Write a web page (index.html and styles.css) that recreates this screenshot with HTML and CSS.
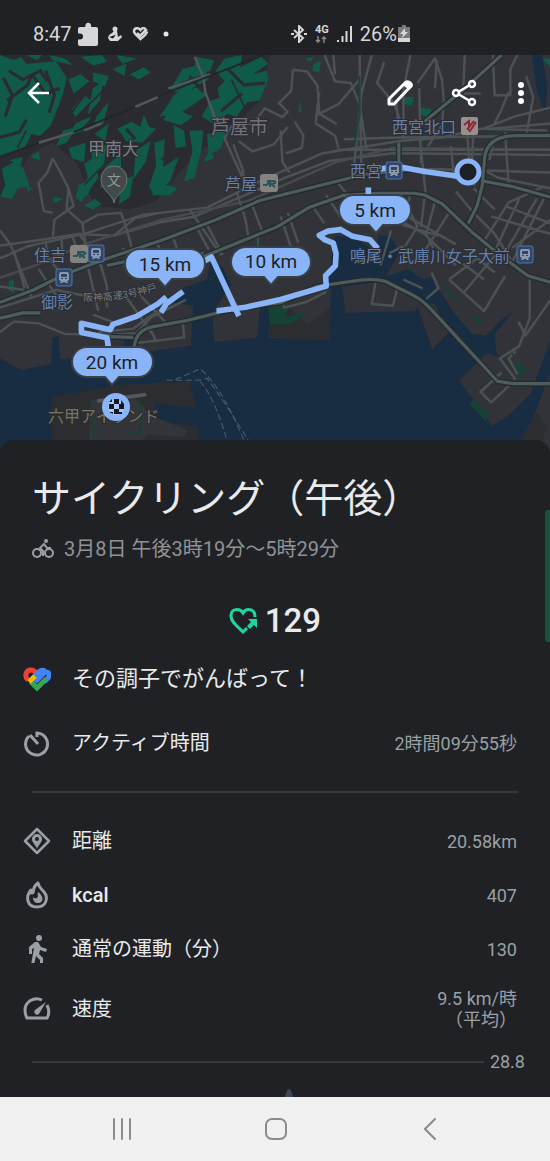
FILE: index.html
```
<!DOCTYPE html>
<html lang="ja">
<head>
    <meta charset="UTF-8">
    <meta name="viewport" content="width=device-width, initial-scale=1.0">
    <title>サイクリング（午後）</title>
    <link rel="stylesheet" href="styles.css">
</head>
<body>
    <div class="status-bar">
        <div class="status-left">
            <span class="clock">8:47</span>
            <svg width="20" height="24" viewBox="0 0 20 24"><path fill="#d6d7d8" d="M2 5h5.500a3 3 0 1 1 5.500 0H18a2 2 0 0 1 2 2v15a2 2 0 0 1-2 2H2a2 2 0 0 1-2-2v-4.500h2a3 3 0 0 0 0-6H0V7a2 2 0 0 1 2-2z"/></svg>
            <svg class="status-figure" width="14" height="16" viewBox="0 0 14 16"><circle cx="7" cy="3" r="2.500" fill="#d6d7d8"/><path fill="#d6d7d8" d="M6 5h3l1 6 3-2 1 2-4 4H2l-2-3 1-3 3-2z"/><path stroke="#202124" d="M2 11l3 1 2-3"/></svg>
            <svg class="status-heart" width="17" height="14" viewBox="0 0 17 14"><path fill="none" stroke="#d6d7d8" stroke-width="2.500" d="M5 6l3 3 6-6c-2-3-4-2-5.500 0C6 0 2 1 2 4.500c0 2 3 4 6.500 7.500C12 9 15 7 15 4.500"/></svg>
            <svg width="6" height="6" viewBox="0 0 6 6"><circle cx="3" cy="3" r="2.500" fill="#e8e8e8"/></svg>
        </div>
        <div class="status-right">
            <svg width="16" height="18" viewBox="0 0 16 18"><path fill="none" stroke="#d6d7d8" stroke-width="2" d="M3 5l9 8-4 4V1l4 4-9 8"/><path stroke="#d6d7d8" stroke-width="2" d="M0 9h3M13 9h3"/></svg>
            <span class="network">4G
                <svg width="12" height="7" viewBox="0 0 12 7"><path fill="none" stroke="#85878a" stroke-width="1.500" d="M3 0v6M1 4l2 2 2-2M9 7V1M7 3l2-2 2 2"/></svg>
            </span>
            <svg width="15" height="16" viewBox="0 0 15 16"><path stroke="#d6d7d8" stroke-width="2" d="M1 16v-2M5.500 16v-6M9.500 16V5M14 16V0"/></svg>
            <span class="battery">26%<svg width="12" height="17" viewBox="0 0 12 17"><path fill="#77797b" d="M4 0h4v2h4v12H0V2h4z"/><path fill="#d6d7d8" d="M0 13h12v4H0zM7 3L2 9h3l-1 4 6-6H7z"/></svg></span>
        </div>
    </div>

    <div class="map-area">
        <svg class="map" viewBox="0 0 550 397">
            <defs>
                <path id="main-roads" d="M0 705l95-35 90-45 120-45 150-50 160-60 125-55 180-45 120-30 150-15M305 600l115-25 95-5 65-5M580 575l110-45 100-40 90-55 100-35 105-6 95 0 30 5 50 25 90 85 80 65 75 55 128 38M0 750l65-15h50M315 803l65 2M383 870v-40q5-45 50-55l100-18 130-32 140-20 100-45 100-15q60-10 95 0l80 40q30 15 60 50l180 195 45 7 105 0M1335 480l25-50 15-60 5-60q0-80 90-80l98 0M1380 360l80 15 108 30M1210 190l110-90L1430 0M1137 250v80"/>
                <g id="train"><rect width="16" height="17" rx="2" fill="#2b4770" stroke="#5875a0"/><path fill="#8f98a4" fill-rule="evenodd" d="M4 3h8l1 2v6l-2 1 1 2h-2l-1-1H7l-1 1H4l1-2-2-1V5zM5 5v3h6V5zM5 9v1h2V9zM9 9v1h2V9z"/></g>
                <g id="jr"><rect width="18" height="18" rx="3" fill="#85837f"/><path fill="none" stroke="#28545c" stroke-width="2" d="M3 11h3q2 0 2-2V6M10 13V7h3q3 0 2 2-1 1-4 1l4 3"/></g>
            </defs>
            <!-- terrain, roads and route share one scaled coordinate space -->
            <g transform="scale(.3508)">
                <rect width="1568" height="1140" fill="#313338"/>
                <path fill="#2a2b31" d="M0 0H770L740 130 650 220 560 280 440 420 370 440 270 430 220 310 150 250 90 280 0 410z"/>

                <!-- forest -->
                <g fill="#105a4a">
                    <path d="M0 0L40 15 60 5 75 25 160 18 190 65 180 110 165 150 145 200 115 230 90 225 70 265 0 290z"/>
                    <path d="M75 0h45l-15 15zM140 0l45 10 25 20-60-15zM230 5l60-5 15 20-40 10zM330 0l60 10-40 15zM195 70l35-15 25 20-45 35zM265 50l45 10-10 30-35-15zM205 155l35-40 20 15-45 50zM265 95l30-20-10 55-35 40zM215 195l45-20-20 40-45 15zM180 215l40-10-30 45-30 10zM280 165l30-30-15 60-30 5zM320 40l40-15-5 35zM370 55l40-20 20 15-35 20z"/>
                    <path d="M560 5l50 10-10 30-50 15zM520 40l60-15 15 45-75 40-35-10zM640 10l50-10-5 35 60-30 20 20-45 30 40-10 5 25-25 60-35 5-30 40-40-10-15-70 20-20-25-30zM500 110l70-20 20 25-75 50-60 10zM600 130l35-10 15 45-35 35-40-25zM490 150l60 25-35 25-50-15z"/>
                    <path d="M335 210l40-20 25 15 10-35 15 35 20 5-40 40-45-5zM270 225l40-30-10 50zM195 265l50-15-5 55-35-10zM260 275l45-20-10 65-25 20zM240 310l30-20 10 60-50 70-15-20 35-50zM300 320l45-40 0 40-25 45-35 15zM390 270l40-25-15 60-35 50 5-60zM440 250l30-10-5 80 45-30-25 70-45 40-15-25 20-60zM495 200l30 15 5 45-30 5zM540 215l40 0-5 50-25 20zM550 270l25-5-20 85-30 10zM590 225l55-10-15 50-35 20zM600 265l10 30-30 10zM225 370l45-20-20 50-35 10zM340 360l40-15-10 60-30 20zM430 400l45-30 30 10-20 20z"/>
                    <path d="M5 325l35-20 25 15 20 55-35 5-15 30-35-5 15-35zM85 290l25-15 5 25zM25 300l40-10-5 25zM75 375l20 5-15 10zM155 405l25 5-30 15zM240 430l30-20 20 15-25 15z"/>
                    <path d="M870 10l25-5-10 15zM895 25l20-10-5 35-20-5zM1145 120h35l-5 25-25-5zM1200 150l30 5-5 25-25-10zM855 130l6 35-10-5zM25 645l15-5 0 40-15-10zM830 560l25-10-10 20zM1545 10h23v25z"/>
                </g>
                <g fill="none" stroke="#2a2b31" stroke-width="9">
                    <path d="M25 45l40 25 50-25 20 30M20 130l60-45 10-30M95 60l35 50 40-15M0 235l55-15 20-35M130 45l25 70-15 50M540 60l40 45M650 40l45 45 60-5M630 160l60-50M360 210l25 30M10 65l25 50-20 60"/>
                    <path stroke-width="5" d="M200 170l60-80M210 185l85-85M230 215l60-60M515 80l60-20M660 70l40 85M460 300l40-40M240 370l60-60M50 265l25-50"/>
                </g>

                <!-- sea -->
                <path fill="#182c42" d="M0 865L60 897 145 882 150 805 167 800 172 868 350 846 355 802 382 800 395 850 545 828 550 715 490 705 460 725 520 665 590 640 600 595 635 605 660 655 605 735 610 818 732 806 742 715 775 700 765 806 940 813 943 668 935 640 955 515 1010 520 1070 560 1080 515 1110 515 1140 560 1100 630 1110 660 1130 680 1155 645 1230 635 1290 730 1345 795 1385 800 1430 755 1465 730 1410 795 1415 850 1435 865 1380 855 1310 930 1405 1058 1460 1010 1500 960 1568 740V1140H0z"/>
                <path fill="#182c42" d="M943 660l27-10 5 85 140-15 70-25 5 65 40 85 45-50 70 10-100-135-80-60-125 40zM1515 0h30l15 90-5 80-25-70z"/>
                <path fill="#313338" d="M975 660l130-15 95 50-15 35-200 5zM1185 700l55 10 40 80-48 50zM1435 865l80-130 53-90v170l-55 150-60 60-45 30-95-130 75-75zM1525 1020l43-110v230h-90z"/>
                <path fill="#2b2d31" d="M145 975l195-35 200-10 20 75-120-10v45l125 20 10 80H150zM1480 1100l50-80 30 40-30 80zM765 740l60-20 50 50 65-50v93l-170-10z"/>
                <path fill="#34353a" d="M260 985l120-20 45 60 110 45-15 20-100-10-50 60H250z"/>
                <path fill="#164236" d="M765 720l65-5-20 30 70-10-50 30-60 5zM1250 640l60 60-20-5zM1340 740l40 20-20 5zM1350 980l45 45-10 20-45-50zM1475 1135l20-30 25 15-10 20zM1460 890l30-10 10 25-25 10zM1220 705l55 55-20-5z"/>
                <path fill="none" stroke="#164236" stroke-width="5" d="M260 985l5 90 45 60M385 980l15 15v80h-40"/>
                <path fill="none" stroke="#4b5d6c" stroke-width="3" stroke-dasharray="18 9" d="M475 927h90l25-5Q650 1000 742 1155M500 925l70-30Q640 950 718 1155M570 930Q620 985 662 1155"/>
                <path fill="none" stroke="#55595b" stroke-width="10" d="M277 986l140-18"/>

                <!-- small roads -->
                <g fill="none" stroke="#4c5254" stroke-width="7" stroke-linejoin="round">
                    <path d="M0 543l130-18 95-15 100 5 130-38 95-15 130-55 140-60 120-45 180-22 450 5"/>
                    <path d="M0 580l80-35 160-35 170-55 180-20 150-75 180-80 220-35 120-10 110-25 190 5"/>
                    <path d="M0 635l100-35 140-60 220-70 250-55 250-110 160-40 448 5" stroke="#48494c"/>
                    <path d="M0 790l40-30 70 5 75 30 120 3 85-5 40-45 100-50M395 820l130-15-5-55M430 785l15 30"/>
                    <path d="M0 500l30 40 60 150M40 560l30 105M0 660l70 10M130 530l5 45 40 50M175 525l5 55M205 515l30 75M225 510l60 80 20 70 0 60M0 720l160-50 100 20M110 610l60 90M250 600l30 130"/>
                    <path d="M150 295l20 35 25 50 15 50-55 40-5 55M150 295l-15 40-25 30 15 80 25 5M195 380l-5 60 45 40 10 70 45 55M235 480l45-25 65-5 20 60 15 55M325 515l60-50 70-15"/>
                    <path d="M450 540l20 60M495 525l25 70M540 440l90 130M560 490l35 65M585 475l50 95M675 390l25 80 10 60M720 430l30 80M735 520l5 50M800 460l30 90M820 450l30 85M890 430l35 50M930 400l40 60M960 360l55 70M690 330l20 60"/>
                    <path d="M360 690l70 100M395 680l75 80M280 790l100-10 70-50M265 740l80 30M350 550l30 50M385 570l-35 30"/>
                    <path d="M835 42l40 5 30 40 5 80 50 30M835 42l-5 60-35 35 25 25-15 15-50-25-35 45-60 5-20 35 50 110M905 170l60-30 60-70M910 105l-10 90 55 35 10 35M800 215l5 90 20 30M840 190l25 40-5 35-45 15M680 245l40 30 60-20 40-50M665 255l30 80"/>
                    <path d="M925 0l30 75 45 5 25 60 20 130M950 0l5 55M1025 0l5 320M1060 0l-30 110-20 200M1095 20l-20 60 50 60 20 60M1130 130l5 80M1170 0l-20 100 0 140M1195 95l5 215M1190 80l50-70 20 60 5 60-5 70-40 60M1245 15l-5 80M1325 0l-5 110 50 0M1405 0l5 115 45 0 0-75 20-40M1450 105l-20 50-20 40M1500 60l20 60-20 110M1568 150l-100 25-90 35M1568 195l-170 15"/>
                    <path d="M980 240l160-5 428-5M960 270h608M1010 340l220-15 338 10M1200 270l15 140M1285 260l10 90 60 20M1330 210l10 110M1350 200l-5 120M1440 220l10 155M1410 240l-15 60M1365 320l55 30 148 30"/>
                    <path d="M1090 400l30 60 90 50 60 60 30 30M1110 400l50 60 140 80M1140 390l50 100-35 55M1170 395l-20 90 100 30M1210 410l-10 80M1240 420l-25 90 20 40M1280 450l-70 110M1300 390l50 60 60 60 50 80M1350 380l60 60M1380 530l70-110 100-45M1410 560l70-150M1430 580l100-170M1460 590l90-180M1400 460l168 50M1440 430l128 50M1460 550l108-80M1320 680l100-120M1280 640l80-60M1280 640l100 90 60-100M1320 595l60 45M1350 570l60 50M1150 640l55 25M1230 620l20 45-35 30M1115 500l-30 100M1150 545l-40 20"/>
                    <path d="M1568 700l-70 100-20-40M1510 640v110l-30 80-55 35 45 60M1470 845l-20 20 25 45M1430 905l-60 55 30 30 65-60M1070 650l-10 60 60 5 15-60M800 690l10 30 60-15 60-30"/>
                    <path stroke="#54565a" d="M555 5l25 60 5 40 30 80 25 20M385 148l65-28M480 95l120-40M110 250l100-30M240 215l50-20"/>
                </g>
                <path fill="none" stroke="#242528" stroke-width="5" d="M0 290l110-40M210 220l175-72M450 118L750 0"/>
                <path fill="none" stroke="#20413e" stroke-width="6" d="M1025 60v110l-15 90M740 510v50M1460 850l30 50"/>

                <use href="#main-roads" class="road-edge"/>
                <use href="#main-roads" class="road-top"/>
            </g>

            <!-- route -->
            <g transform="scale(.3508)" fill="none" stroke="#8ab4f8" stroke-width="16" stroke-linejoin="round">
                <path d="M1336 350L1215 333 1145 320 1085 324M1050 378v50"/>
                <path stroke-width="9" d="M1047 321h45"/>
                <path d="M975 497l-40 5-25 12 15 12 25 10 8 30-2 35-28 28 2 30-130 38-100 22-80 10H617M578 590l25-14 78 168M970 497l35 20 50 10 22 25M522 674l-48 35-15 25M474 690l-25 20-60 35-67 23-8 15-82-18v26l73 15 10 70M317 985l5 20 10 20"/>
            </g>

            <!-- place names -->
            <g class="place">
                <text class="city" x="211" y="79">芦屋市</text>
                <text class="school-name" x="88" y="100">甲南大</text>
                <text class="station" x="392" y="78">西宮北口</text>
                <text class="station" x="225" y="135">芦屋</text>
                <text class="station" x="350" y="122">西宮</text>
                <text class="station" x="350" y="207">鳴尾・武庫川女子大前</text>
                <text class="station" x="34" y="206">住吉</text>
                <text class="station" x="41" y="253">御影</text>
                <text class="island" x="48" y="367">六甲アイランド</text>
                <path id="highway" fill="none" d="M83 246Q130 246 162 233"/>
                <text class="road-name"><textPath href="#highway">阪神高速3号神戸</textPath></text>
            </g>
            <path fill="#42494a" stroke="#6e7376" d="M114 148C113 139 101 136 101 124a13 13 0 0 1 26 0c0 12-12 15-13 24z"/>
            <text class="school" x="114" y="130">文</text>
            <use href="#train" x="386" y="107"/>
            <use href="#train" x="517" y="191"/>
            <use href="#train" x="88" y="190"/>
            <use href="#train" x="56" y="214"/>
            <use href="#jr" x="260" y="119"/>
            <use href="#jr" x="70" y="190"/>
            <rect x="461" y="62" width="17" height="18" rx="2" fill="#97908e"/>
            <path fill="none" stroke="#8c2634" stroke-width="2" d="M464 70l5-4v6l5-6M467 73l3 3 6-9"/>

            <circle cx="468" cy="117" r="11" fill="#1c2025" stroke="#8ab4f8" stroke-width="5"/>
            <circle cx="116" cy="352" r="14" fill="#8ab4f8"/>
            <circle cx="116" cy="352" r="8" fill="#a9c8fb"/>
            <path fill="#15191f" d="M114 344h5v5h-5zM109 349h5v5h-5zM119 349h5v5h-5zM114 354h5v5h-5zM109 347l3-3v3zM121 345l3 4h-3zM109 357h4v2zM119 357h3v2h-3z"/>
            <g class="distance">
                <path d="M354 140h42a15 15 0 0 1 0 30h-13l-7 8-7-8h-15a15 15 0 0 1 0-30z"/>
                <path d="M246 192h50a15 15 0 0 1 0 30h-18l-7 8-7-8h-18a15 15 0 0 1 0-30z"/>
                <path d="M140 194h50a15 15 0 0 1 0 30h-18l-7 8-7-8h-18a15 15 0 0 1 0-30z"/>
                <path d="M87 292h51a15 15 0 0 1 0 30h-19l-7 8-7-8H87a15 15 0 0 1 0-30z"/>
                <text x="375" y="162">5 km</text>
                <text x="271" y="213">10 km</text>
                <text x="165" y="216">15 km</text>
                <text x="112" y="314">20 km</text>
            </g>
        </svg>

        <header class="toolbar">
            <button aria-label="戻る"><svg width="24" height="24" viewBox="0 0 24 24"><path fill="none" stroke="#fff" stroke-width="2.500" d="M23 12H3M13 2L3 12l10 10"/></svg></button>
            <button class="edit" aria-label="編集"><svg width="26" height="26" viewBox="0 0 26 26"><path fill="none" stroke="#fff" stroke-width="3" stroke-linejoin="round" d="M2 24v-5L19 2q2-1 4 1t1 3L7 24z"/><path fill="#fff" d="M16 5l4-4q7 0 5 6l-3 3z"/></svg></button>
            <button aria-label="共有"><svg width="26" height="28" viewBox="0 0 26 28"><g fill="none" stroke="#fff" stroke-width="2.500"><path d="M7 13l12-7M7 15l12 7"/><circle cx="5" cy="14" r="3"/><circle cx="21" cy="5" r="3"/><circle cx="21" cy="23" r="3"/></g></svg></button>
            <button class="more" aria-label="その他"><svg width="6" height="24" viewBox="0 0 6 24"><g fill="#fff"><circle cx="3" cy="4" r="3"/><circle cx="3" cy="12" r="3"/><circle cx="3" cy="20" r="3"/></g></svg></button>
        </header>
    </div>

    <main class="sheet">
        <div class="scroll-thumb"></div>
        <h1>サイクリング（午後）</h1>
        <p class="date">
            <svg width="22" height="20" viewBox="0 0 22 20"><g fill="none" stroke="#9aa0a6" stroke-width="2"><circle cx="5" cy="14" r="4"/><circle cx="17" cy="14" r="4"/><path d="M11 17v-5L8 9l4-4 3 4h4"/></g><circle cx="14" cy="2" r="2" fill="#9aa0a6"/></svg>
            3月8日 午後3時19分〜5時29分
        </p>
        <div class="score">
            <svg width="28" height="26" viewBox="0 0 28 26"><path fill="none" stroke="#1ed6a4" stroke-width="3" d="M26 9C26 0 17 0 14 5 11 0 2 0 2 8c0 6 6 10 12 16l4-4"/><path fill="#1ed6a4" d="M19 11h9v9l-3-3-4 4-3-3 4-4z"/></svg>
            129
        </div>
        <p class="row message">
            <svg class="icon" viewBox="0 0 28 28"><g fill="none" stroke-width="5"><path stroke="#ea4335" d="M5 15C1 11 3 5 8 5q3 0 5 3l4 4"/><path stroke="#4285f4" d="M12 17l8-8c4-5 8 0 5 4l-4 4M12 11l3-3q3-4 7-2"/><path stroke="#34a853" d="M23 14l-9 9-6-6"/><path stroke="#fbbc04" d="M6 17l6-6"/></g></svg>
            その調子でがんばって！
        </p>
        <dl class="stats">
            <div class="row active-time">
                <dt><svg class="icon" viewBox="0 0 28 28"><path fill="none" stroke="#9aa0a6" stroke-width="3" d="M14 8V4a11 11 0 1 1-8 3M7 6l8 9"/></svg>アクティブ時間</dt>
                <dd>2時間09分55秒</dd>
            </div>
            <div class="row">
                <dt><svg class="icon" viewBox="0 0 28 28"><path fill="none" stroke="#9aa0a6" stroke-width="2.500" stroke-linejoin="round" d="M14 2l12 12-12 12L2 14z"/><path fill="#9aa0a6" fill-rule="evenodd" d="M14 22c-1-4-5-6-5-10a5 5 0 0 1 10 0c0 4-4 6-5 10zm0-12a2 2 0 1 0 0 4 2 2 0 0 0 0-4z"/></svg>距離</dt>
                <dd>20.58km</dd>
            </div>
            <div class="row">
                <dt class="kcal"><svg class="icon" viewBox="0 0 28 28"><path fill="none" stroke="#9aa0a6" stroke-width="3" stroke-linejoin="round" d="M15 2c-7 5-3 10-6 10-1 0-2-1-1-3-6 7-4 17 6 17 9 0 12-9 7-15-2-3-5-4-6-9z"/><path fill="#9aa0a6" d="M15 11c-1 4 1 4-1 6-2 1-3 0-4-1 0 4 2 6 5 6 6 0 6-7 0-11z"/></svg>kcal</dt>
                <dd>407</dd>
            </div>
            <div class="row">
                <dt><svg class="icon" viewBox="0 0 28 28"><path fill="#9aa0a6" d="M16 0a3 3 0 1 1 0 6 3 3 0 0 1 0-6zM12 7h3l3 5 6 2-1 3-6-2-1 4 4 4v7h-3v-5l-4-4-2 9H8l3-17-2 1v5H6v-7z"/></svg>通常の運動（分）</dt>
                <dd>130</dd>
            </div>
            <div class="row speed">
                <dt><svg class="icon" viewBox="0 0 28 28"><path fill="none" stroke="#9aa0a6" stroke-width="3" d="M19 5C11 1 2 7 2 15q0 5 2 8h20c3-5 2-9 0-13"/><path fill="#9aa0a6" d="M23 7l-7 12c-3 2-6-1-4-4z"/></svg>速度</dt>
                <dd>9.5 km/時<br>（平均）</dd>
            </div>
        </dl>
        <div class="chart">
            <div class="axis"><span class="line"></span><span>28.8</span></div>
            <svg class="peak" width="8" height="8" viewBox="0 0 8 8"><path fill="#3c4858" d="M0 8Q2 0 4 0t4 8z"/></svg>
        </div>
    </main>

    <nav class="nav-bar">
        <button aria-label="履歴"><svg width="20" height="22" viewBox="0 0 20 22"><path stroke="#8b8b8b" stroke-width="2" stroke-linecap="round" d="M2 1v20M10 1v20M18 1v20"/></svg></button>
        <button aria-label="ホーム"><svg width="22" height="22" viewBox="0 0 22 22"><rect x="1" y="1" width="20" height="20" rx="6" fill="none" stroke="#8b8b8b" stroke-width="2"/></svg></button>
        <button aria-label="戻る"><svg width="12" height="22" viewBox="0 0 12 22"><path fill="none" stroke="#8b8b8b" stroke-width="2" stroke-linecap="round" d="M11 1L1 11l10 10"/></svg></button>
    </nav>
</body>
</html>
```
FILE: styles.css
```
* {
    box-sizing: border-box;
}
body {
    margin: 0;
    min-height: 100vh;
    display: flex;
    flex-direction: column;
    background: #202124;
    color: #e8eaed;
    font-family: Roboto, "Noto Sans CJK JP", sans-serif;
}
svg {
    display: block;
    flex: none;
}
button {
    display: flex;
    align-items: center;
    justify-content: center;
    padding: 0;
    border: 0;
    background: none;
}
h1, p, dl, dd {
    margin: 0;
}

/* status bar */
.status-bar {
    height: 55px;
    padding: 12px 140px 0 33px;
    display: flex;
    align-items: center;
    justify-content: space-between;
    font-size: 20px;
    color: #d6d7d8;
}
.status-left, .status-right {
    display: flex;
    align-items: center;
}
.clock {
    margin-right: 6px;
}
.status-figure {
    margin: 0 10px;
}
.status-heart {
    margin-right: 14px;
}
.status-right {
    gap: 8px;
}
.network {
    font-size: 11px;
    line-height: 12px;
    font-weight: 700;
}
.battery {
    display: flex;
    align-items: center;
    gap: 1px;
}

/* map */
.map-area {
    position: relative;
}
.map {
    width: 100%;
    height: auto;
}
.road-edge, .road-top {
    fill: none;
    stroke-linejoin: round;
}
.road-edge {
    stroke: #222c30;
    stroke-width: 17px;
}
.road-top {
    stroke: #4f5c5b;
    stroke-width: 9px;
}
.place {
    font-size: 16px;
}
.place text {
    paint-order: stroke;
    stroke: #2b2d32;
    stroke-width: 2px;
}
.place .city {
    fill: #757078;
    font-size: 19px;
}
.place .school-name {
    fill: #7d7f83;
    font-size: 17px;
}
.place .station {
    fill: #6580ad;
}
.place .island {
    fill: #777560;
}
.place .road-name {
    fill: #777b7f;
    font-size: 10px;
}
.school {
    fill: #92979a;
    font-size: 14px;
    text-anchor: middle;
}
.distance path {
    fill: #8ab4f8;
    stroke: #3a4047;
    stroke-width: 2px;
}
.distance text {
    fill: #202124;
    font-size: 19px;
    text-anchor: middle;
}
.toolbar {
    position: absolute;
    top: 0;
    left: 0;
    right: 0;
    height: 75px;
    padding: 0 12px 0 14px;
    display: flex;
    align-items: center;
    gap: 16px;
}
.toolbar button {
    width: 48px;
    height: 48px;
}
.toolbar .edit {
    margin-left: auto;
}
.toolbar .more {
    width: 34px;
}

/* activity details */
.sheet {
    position: relative;
    flex: 1;
    margin-top: -12px;
    padding-top: 35px;
    display: flex;
    flex-direction: column;
    border-radius: 14px 14px 0 0;
    background: #202124;
}
.scroll-thumb {
    position: absolute;
    top: 70px;
    right: 0;
    width: 5px;
    height: 132px;
    border-radius: 3px 0 0 3px;
    background: #17523f;
}
h1 {
    padding: 0 32px;
    font-size: 39px;
    line-height: 48px;
    font-weight: 400;
}
.date {
    margin-top: 12px;
    padding: 0 32px;
    display: flex;
    align-items: center;
    gap: 10px;
    font-size: 20px;
    line-height: 28px;
    color: #8f9398;
}
.score {
    margin-top: 38px;
    display: flex;
    align-items: center;
    justify-content: center;
    gap: 8px;
    font-size: 33px;
    line-height: 40px;
    font-weight: 500;
}
.row {
    min-height: 54px;
    padding: 0 33px 0 23px;
    display: flex;
    align-items: center;
    justify-content: space-between;
}
.row dt, .message {
    display: flex;
    align-items: center;
    gap: 21px;
    font-size: 20px;
    line-height: 28px;
}
.row .kcal {
    font-weight: 500;
}
.message {
    margin-top: 11px;
    justify-content: flex-start;
    font-size: 22px;
}
.icon {
    width: 28px;
    height: 28px;
}
.stats {
    margin-top: 10px;
}
.row dd {
    font-size: 18px;
    line-height: 21px;
    text-align: right;
    color: #9aa0a6;
}
.active-time {
    position: relative;
    margin-bottom: 44px;
}
.active-time::after {
    content: "";
    position: absolute;
    left: 32px;
    right: 32px;
    bottom: -23px;
    height: 2px;
    background: #36383b;
}
.speed {
    min-height: 66px;
}
.chart {
    flex: 1;
    margin-top: 8px;
    display: flex;
    flex-direction: column;
    align-items: center;
    justify-content: space-between;
}
.axis {
    width: 100%;
    padding: 0 25px 0 32px;
    display: flex;
    align-items: center;
    gap: 6px;
    font-size: 18px;
    line-height: 24px;
    color: #9aa0a6;
}
.line {
    flex: 1;
    height: 2px;
    background: #36383b;
}
.peak {
    margin-left: 28px;
}

/* system navigation */
.nav-bar {
    height: 64px;
    padding: 0 43px 0 45px;
    display: flex;
    background: #f1f1f1;
}
.nav-bar button {
    flex: 1;
}
```
